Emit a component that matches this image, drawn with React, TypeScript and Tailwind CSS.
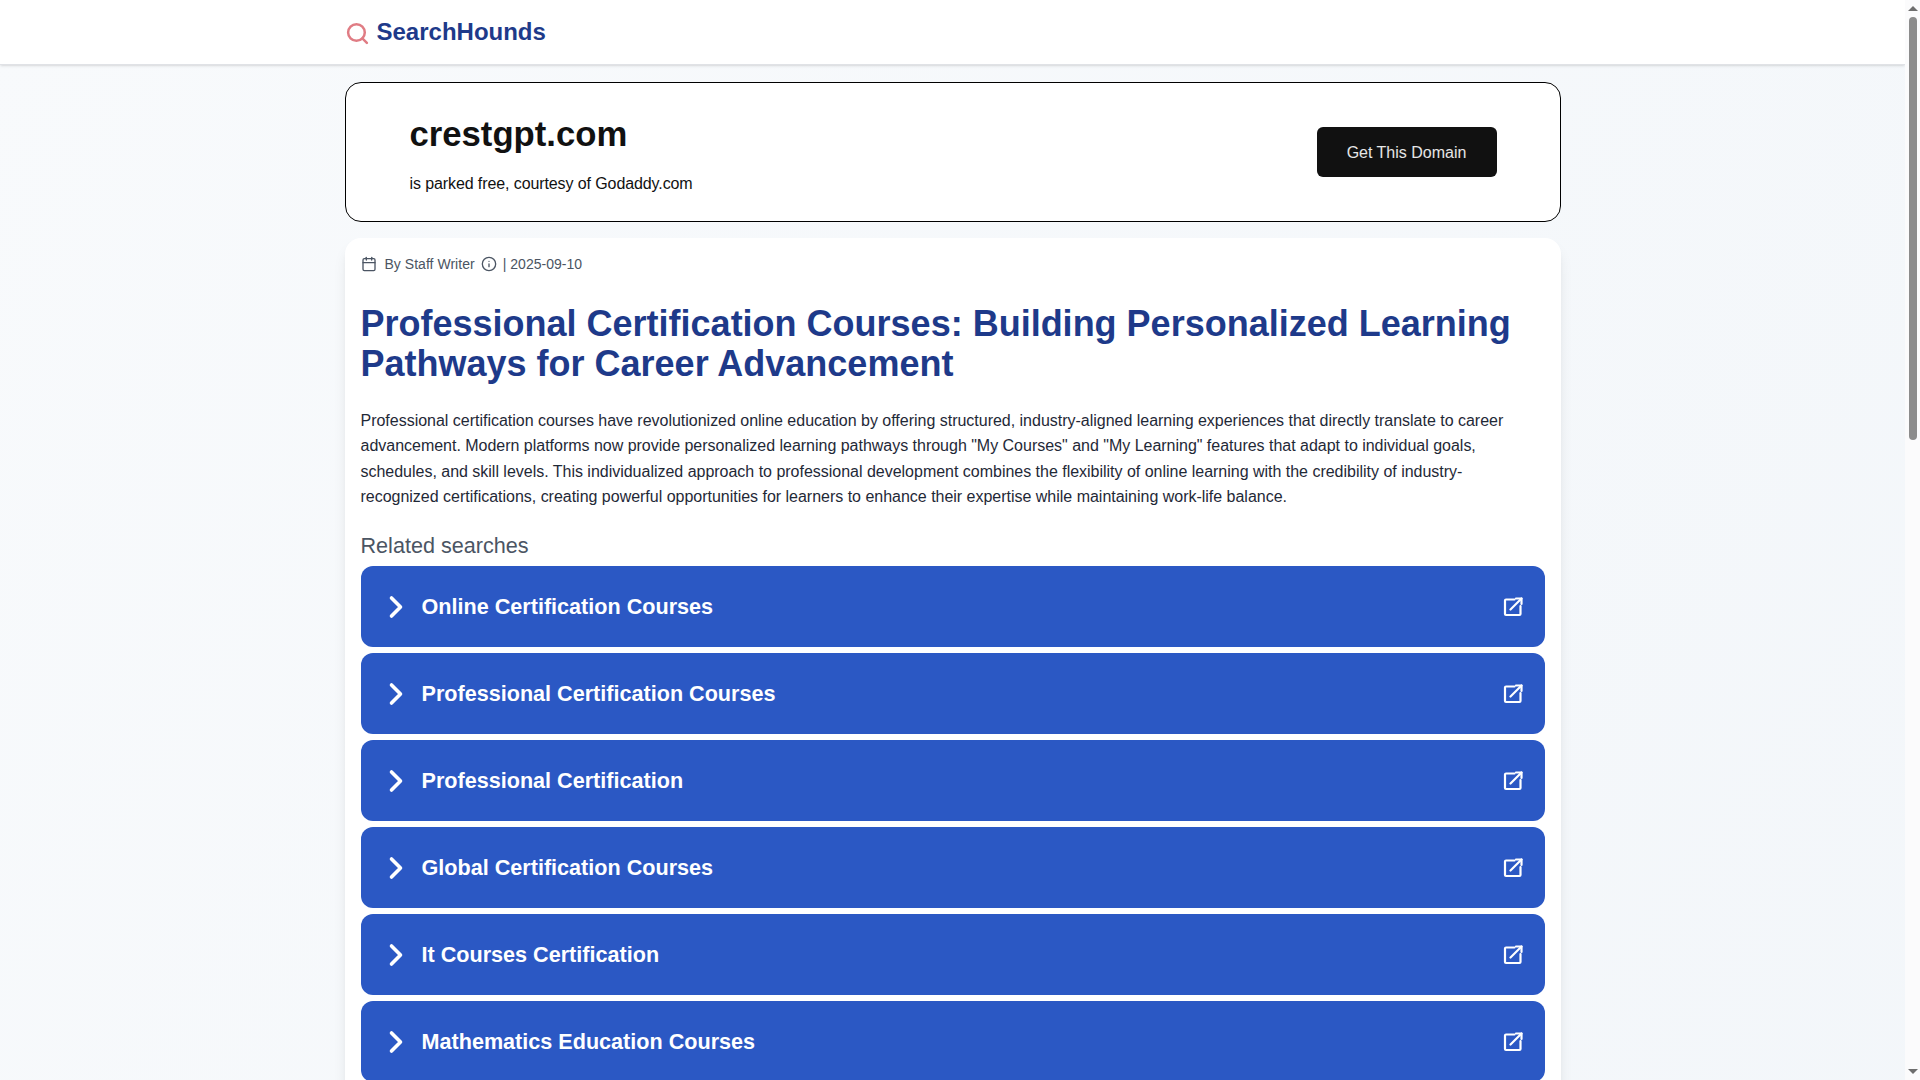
import { Calendar, ChevronRight, Info, Search } from "lucide-react"

const searches = [
  "Online Certification Courses",
  "Professional Certification Courses",
  "Professional Certification",
  "Global Certification Courses",
  "It Courses Certification",
  "Mathematics Education Courses",
]

function OpenIcon() {
  return (
    <svg viewBox="0 0 20 20" fill="none" stroke="currentColor" strokeWidth={2.2} strokeLinecap="round" strokeLinejoin="round" className="w-5 h-5 mt-[2px]">
      <path d="M11.5 2.5H3a1 1 0 0 0-1 1V17a1 1 0 0 0 1 1h13.5a1 1 0 0 0 1-1V9" />
      <path d="M7.5 12.5L18.5 1.5" />
      <path d="M13 1.5h5.5V7" />
    </svg>
  )
}

function Scrollbar() {
  return (
    <div className="fixed top-0 right-0 w-[15px] h-screen bg-[#fbfbfc] flex flex-col items-center">
      <div className="mt-[6px] w-0 h-0 border-x-[5px] border-x-transparent border-b-[5px] border-b-[#6e6e6e]" />
      <div className="mt-[6px] w-2 h-[423px] rounded-full bg-[#8c8c8c]" />
      <div className="mt-auto mb-[6px] w-0 h-0 border-x-[5px] border-x-transparent border-t-[5px] border-t-[#6e6e6e]" />
    </div>
  )
}

export default function App() {
  return (
    <div className="w-[1905px] min-h-[2690px] bg-gradient-to-br from-[#f8fafc] to-[#f1f5f9] font-['Liberation_Sans',Arial,sans-serif]">
      <header className="h-[65px] bg-white border-b border-[#e0e2e6] shadow-sm">
        <div className="mx-auto w-[1216px] h-full flex items-center gap-[7px]">
          <Search className="w-[25px] h-[25px] mt-0.5 text-[#e07c84]" strokeWidth={2.4} />
          <span className="text-2xl font-bold text-[#1e3a8a]">SearchHounds</span>
        </div>
      </header>

      <main className="mx-auto w-[1216px] pt-[17px]">
        {/* domain banner */}
        <div className="h-[140px] bg-white border border-black rounded-2xl pl-[64px] pr-[63px] flex items-center justify-between">
          <div className="pt-[5px]">
            <h2 className="text-[34.7px] leading-10 font-bold text-[#111111] mb-[18px]">crestgpt.com</h2>
            <p className="text-base text-[#111111] tracking-[-0.1px]">is parked free, courtesy of Godaddy.com</p>
          </div>
          <button className="w-[180px] h-[50px] pt-0.5 bg-[#111111] text-white/90 rounded-md text-base">Get This Domain</button>
        </div>

        {/* article */}
        <article className="mt-4 bg-white rounded-2xl shadow-lg p-4 min-h-[1200px]">
          <div className="flex items-center text-sm text-[#4b5563] tracking-[0.03px] h-[20px] mb-[30px]">
            <Calendar className="w-4 h-4 mr-2" />
            <span>By Staff Writer</span>
            <Info className="w-4 h-4 mx-1.5" />
            <span>| 2025-09-10</span>
          </div>
          <h1 className="text-4xl font-bold text-[#1e3a8a] leading-10 mb-6">
            Professional Certification Courses: Building Personalized Learning Pathways for Career Advancement
          </h1>
          <p className="text-base leading-[25.4px] text-[#1f2937] mb-[22px] pr-[20px] tracking-[-0.015px]">
            Professional certification courses have revolutionized online education by offering structured, industry-aligned learning experiences that directly translate to career advancement. Modern platforms now provide personalized learning pathways through "My Courses" and "My Learning" features that adapt to individual goals, schedules, and skill levels. This individualized approach to professional development combines the flexibility of online learning with the credibility of industry-recognized certifications, creating powerful opportunities for learners to enhance their expertise while maintaining work-life balance.
          </p>
          <h3 className="text-[21.6px] leading-7 text-[#4b5563] mb-[6px]">Related searches</h3>
          <div className="flex flex-col gap-[6px]">
            {searches.map((s) => (
              <a key={s} className="h-[81px] bg-[#2b58c4] rounded-xl flex items-center justify-between pl-[17px] pr-[22px] text-white">
                <span className="flex items-center gap-[8px]">
                  <ChevronRight className="w-9 h-9 mt-px" strokeWidth={2.4} />
                  <span className="text-[21.6px] font-bold mt-[3px]">{s}</span>
                </span>
                <OpenIcon />
              </a>
            ))}
          </div>
        </article>
      </main>
      <Scrollbar />
    </div>
  )
}
